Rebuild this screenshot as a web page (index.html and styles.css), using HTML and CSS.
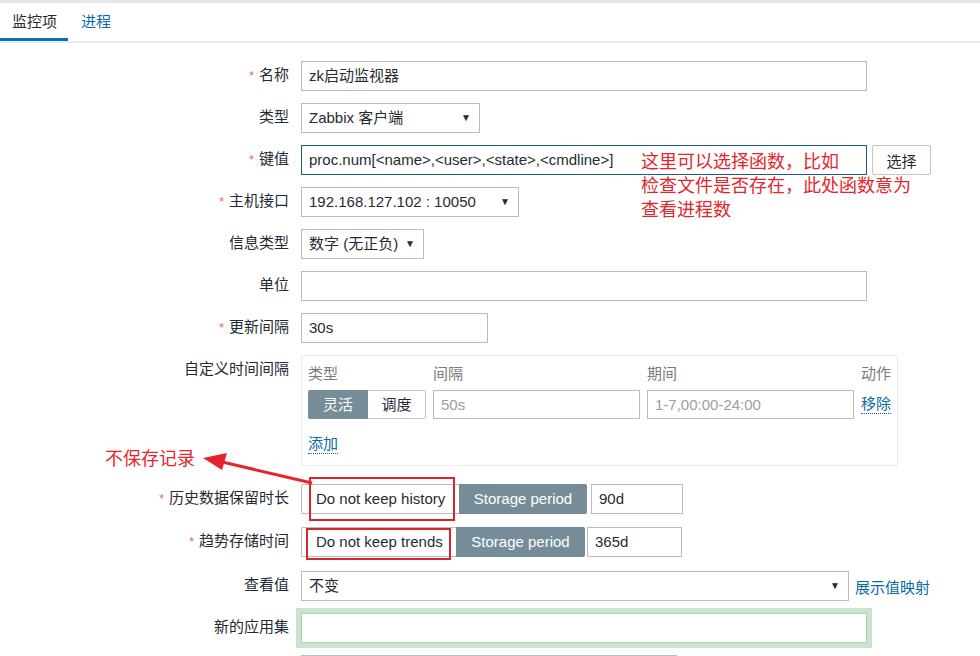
FILE: index.html
```html
<!DOCTYPE html>
<html lang="zh-CN">
<head>
<meta charset="utf-8">
<title>监控项</title>
<link rel="stylesheet" href="styles.css">
</head>
<body>
<div class="page">
  <div class="topstrip"></div>
  <nav class="tabs">
    <span class="tab active">监控项</span>
    <span class="tab">进程</span>
  </nav>

  <div class="form">
    <div class="row">
      <label class="lbl"><span class="ast">*</span>名称</label>
      <div class="ctl"><div class="input w-full">zk启动监视器</div></div>
    </div>
    <div class="row">
      <label class="lbl">类型</label>
      <div class="ctl"><div class="select w-type">Zabbix 客户端<span class="arr">▼</span></div></div>
    </div>
    <div class="row">
      <label class="lbl"><span class="ast">*</span>键值</label>
      <div class="ctl">
        <div class="input w-full focus">proc.num[&lt;name&gt;,&lt;user&gt;,&lt;state&gt;,&lt;cmdline&gt;]</div>
        <button class="btn">选择</button>
      </div>
    </div>
    <div class="row">
      <label class="lbl"><span class="ast">*</span>主机接口</label>
      <div class="ctl"><div class="select w-iface">192.168.127.102 : 10050<span class="arr">▼</span></div></div>
    </div>
    <div class="row">
      <label class="lbl">信息类型</label>
      <div class="ctl"><div class="select w-info">数字 (无正负)<span class="arr">▼</span></div></div>
    </div>
    <div class="row">
      <label class="lbl">单位</label>
      <div class="ctl"><div class="input w-full"></div></div>
    </div>
    <div class="row">
      <label class="lbl"><span class="ast">*</span>更新间隔</label>
      <div class="ctl"><div class="input w-delay">30s</div></div>
    </div>
    <div class="row row-top row-box">
      <label class="lbl lbl-top">自定义时间间隔</label>
      <div class="ctl">
        <div class="ibox">
          <div class="igrid">
            <span class="ih">类型</span>
            <span class="ih">间隔</span>
            <span class="ih">期间</span>
            <span class="ih">动作</span>
            <div class="seg">
              <span class="seg-on">灵活</span><span class="seg-off">调度</span>
            </div>
            <div class="input ph">50s</div>
            <div class="input ph">1-7,00:00-24:00</div>
            <a class="link dotted">移除</a>
          </div>
          <a class="link dotted add">添加</a>
        </div>
      </div>
    </div>
    <div class="row row-hist">
      <label class="lbl"><span class="ast">*</span>历史数据保留时长</label>
      <div class="ctl">
        <div class="stor">
          <span class="opt opt-hist">Do not keep history</span><span class="opt-on on-hist">Storage period</span>
          <span class="mark mark-hist"></span>
        </div>
        <div class="input w-90">90d</div>
      </div>
    </div>
    <div class="row row-trend">
      <label class="lbl"><span class="ast">*</span>趋势存储时间</label>
      <div class="ctl">
        <div class="stor">
          <span class="opt opt-trend">Do not keep trends</span><span class="opt-on on-trend">Storage period</span>
          <span class="mark mark-trend"></span>
        </div>
        <div class="input w-365">365d</div>
      </div>
    </div>
    <div class="row">
      <label class="lbl">查看值</label>
      <div class="ctl"><div class="select w-val">不变<span class="arr">▼</span></div><a class="link map">展示值映射</a></div>
    </div>
    <div class="row">
      <label class="lbl">新的应用集</label>
      <div class="ctl"><div class="input w-full glow"></div></div>
    </div>
    <div class="row">
      <label class="lbl"></label>
      <div class="ctl"><div class="input w-last"></div></div>
    </div>
  </div>

  <div class="note note-key">这里可以选择函数，比如<br>检查文件是否存在，此处函数意为<br>查看进程数</div>
  <div class="note note-hist">不保存记录</div>
  <svg class="arrow" width="120" height="40" viewBox="0 0 120 40">
    <line x1="112" y1="31" x2="18" y2="9" stroke="#e4262c" stroke-width="3"/>
    <polygon points="3,6 27,1 22,18" fill="#e4262c"/>
  </svg>
</div>
</body>
</html>
```
FILE: styles.css
```css
* { box-sizing: border-box; }
html, body { margin: 0; padding: 0; background: #fff; }
body {
  font-family: "Liberation Sans", Arial, "Noto Sans CJK SC", sans-serif;
  font-size: 15px;
  color: #1f2c33;
}
.page { position: relative; width: 980px; height: 656px; overflow: hidden; }
.topstrip { height: 3px; background: #e6e6e6; }
.tabs {
  display: flex;
  height: 40px;
  border-bottom: 2px solid #ebebeb;
}
.tab {
  padding: 0 12px 0 13px;
  line-height: 38px;
  height: 38px;
  color: #0a6aa6;
  white-space: nowrap;
}
.tab.active {
  color: #1f2c33;
  border-bottom: 3px solid #0a6eb3;
  padding: 0 11px 0 12px;
}

.form { padding-top: 18px; }
.row { display: flex; align-items: center; margin-bottom: 12px; }
.row-top { align-items: flex-start; }
.row-box { margin-bottom: 18px; }
.row-hist { margin-bottom: 13px; }
.row-trend { margin-bottom: 14px; }
.lbl {
  width: 289px;
  text-align: right;
  color: #1f2c33;
  flex: none;
  line-height: 20px;
  padding-bottom: 2px;
}
.lbl-top { padding-top: 4px; }
.ast { color: #e07070; margin-right: 5px; font-size: 13px; }
.ctl { margin-left: 12px; display: flex; align-items: center; }

.input, .select {
  height: 30px;
  border: 1px solid #bcbcbc;
  background: #fff;
  padding: 0 7px;
  line-height: 28px;
  white-space: nowrap;
  overflow: hidden;
}
.select { position: relative; padding-right: 24px; }
.arr {
  position: absolute;
  right: 8px;
  top: 0;
  font-size: 10px;
  color: #1f2c33;
}
.w-full { width: 566px; }
.w-type { width: 179px; }
.w-iface { width: 218px; }
.w-info { width: 123px; }
.w-delay { width: 187px; }
.w-val { width: 548px; }
.w-90 { width: 92px; margin-left: 4px; }
.w-365 { width: 95px; margin-left: 2px; }
.w-last { width: 376px; }
.focus { border-color: #1c5a8c; }
.glow { box-shadow: 0 0 0 5px #cbe2cb; border-color: #b2ccb2; }

.btn {
  margin-left: 5px;
  width: 59px;
  height: 30px;
  border: 1px solid #c4c4c4;
  border-radius: 2px;
  background: #fff;
  font: inherit;
  color: #1f2c33;
  padding: 0;
}

.link { color: #0a6aa6; text-decoration: none; }
.dotted { border-bottom: 1px dotted #0a6aa6; line-height: 18px; }
.map { margin-left: 6px; }

.ibox {
  width: 597px;
  height: 111px;
  border: 1px solid #ebebeb;
  border-radius: 2px;
  padding: 8px 6px 0 6px;
}
.igrid {
  display: grid;
  grid-template-columns: 118px 207px 207px auto;
  column-gap: 7px;
  row-gap: 6px;
  align-items: center;
}
.ih { color: #7b7b7b; line-height: 20px; }
.igrid > span:last-of-type { text-align: right; }
.igrid .link { justify-self: end; }
.igrid .input { height: 29px; line-height: 27px; width: auto; }
.ph { color: #9e9e9e; }
.seg { display: flex; height: 29px; }
.seg-on {
  width: 60px;
  background: #768d99;
  color: #fff;
  text-align: center;
  line-height: 29px;
  border-radius: 2px 0 0 2px;
}
.seg-off {
  width: 58px;
  border: 1px solid #c4c4c4;
  border-left: none;
  text-align: center;
  line-height: 27px;
  border-radius: 0 2px 2px 0;
}
.add { display: inline-block; margin-top: 16px; }

.stor { position: relative; display: flex; height: 30px; }
.opt {
  border: 1px solid #bcbcbc;
  border-right: none;
  line-height: 28px;
  padding-left: 14px;
  border-radius: 2px 0 0 2px;
  white-space: nowrap;
}
.opt-hist { width: 158px; }
.opt-trend { width: 155px; }
.opt-on {
  background: #768d99;
  color: #fff;
  line-height: 30px;
  text-align: center;
  border-radius: 0 2px 2px 0;
  white-space: nowrap;
}
.on-hist { width: 128px; }
.on-trend { width: 129px; }
.mark {
  position: absolute;
  border: 2px solid #d8262f;
}
.mark-hist { left: 8px; top: -7px; width: 146px; height: 44px; }
.mark-trend { left: 5px; top: 1px; width: 145px; height: 32px; }

.note {
  position: absolute;
  color: #e4262c;
  font-size: 18px;
  line-height: 24px;
  font-family: "Noto Sans CJK SC", "Liberation Sans", sans-serif;
}
.note-key { left: 641px; top: 148px; }
.note-hist { left: 105px; top: 445px; }
.arrow { position: absolute; left: 200px; top: 452px; }
```
